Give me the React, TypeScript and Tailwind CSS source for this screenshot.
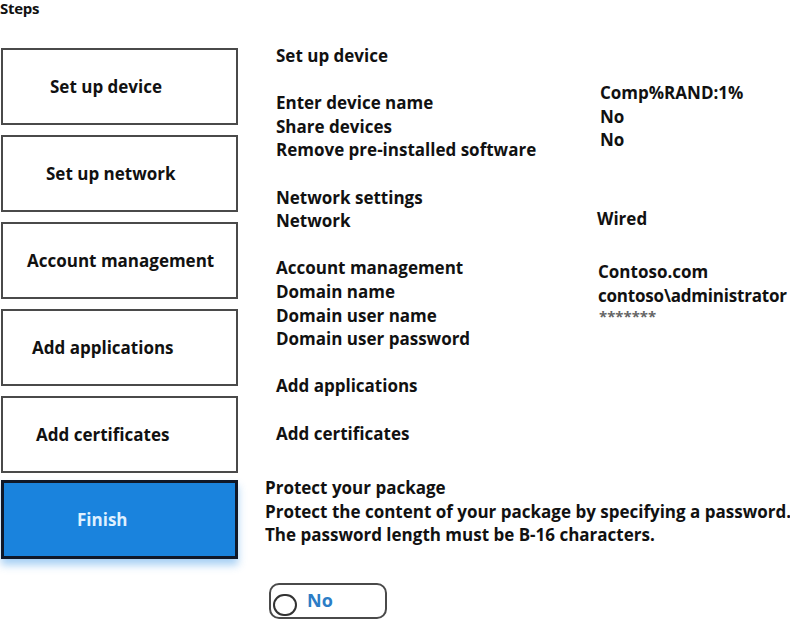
import React from "react";

const steps = [
  { label: "Set up device", pl: "pl-[47px]" },
  { label: "Set up network", pl: "pl-[43px]" },
  { label: "Account management", pl: "pl-[24px]" },
  { label: "Add applications", pl: "pl-[29px]" },
  { label: "Add certificates", pl: "pl-[33px]" },
];

export default function App() {
  return (
    <div className="w-[790px] h-[621px] bg-white overflow-hidden text-[#111] font-['Open_Sans',sans-serif]">
      <div className="text-[15px] font-bold leading-[17px] tracking-[-0.3px]">Steps</div>
      <div className="flex">
        <div className="flex flex-col w-[237px] ml-[1px] mt-[31px] shrink-0">
          {steps.map((s) => (
            <div
              key={s.label}
              className={`h-[77px] mb-[10px] border-2 border-[#4a4a4a] flex items-center text-[17px] font-bold ${s.pl}`}
            >
              {s.label}
            </div>
          ))}
          <div className="h-[79px] -mt-[3px] border-[3px] border-[#101828] bg-[#1a83dd] flex items-center pl-[73px] text-[17px] font-bold text-[#dff0ff] shadow-[0_6px_8px_rgba(60,150,230,0.45)]">
            Finish
          </div>
        </div>
        <div className="flex flex-col mt-[27px]">
          <div className="flex ml-[38px] text-[17px] font-bold leading-[23.6px] whitespace-nowrap">
            <div className="flex flex-col w-[324px] shrink-0">
              <div>Set up device</div>
              <div className="h-[23.6px]" />
              <div>Enter device name</div>
              <div>Share devices</div>
              <div>Remove pre-installed software</div>
              <div className="h-[23.6px]" />
              <div>Network settings</div>
              <div>Network</div>
              <div className="h-[23.6px]" />
              <div>Account management</div>
              <div>Domain name</div>
              <div>Domain user name</div>
              <div>Domain user password</div>
              <div className="h-[23.6px]" />
              <div>Add applications</div>
              <div className="h-[23.6px]" />
              <div>Add certificates</div>
            </div>
            <div className="flex flex-col">
              <div className="mt-[37px]">Comp%RAND:1%</div>
              <div>No</div>
              <div>No</div>
              <div className="mt-[55px] -ml-[3px]">Wired</div>
              <div className="mt-[30px] -ml-[2px]">Contoso.com</div>
              <div className="-ml-[2px] tracking-[-0.2px]">contoso\administrator</div>
              <div className="text-[15px] leading-[14px] text-[#666] -ml-[1px] mt-[1px]">*******</div>
            </div>
          </div>
          <div className="ml-[27px] mt-[31px] text-[17px] font-bold leading-[23.6px] whitespace-nowrap">
            <div>Protect your package</div>
            <div>Protect the content of your package by specifying a password.</div>
            <div>The password length must be B-16 characters.</div>
          </div>
          <div className="ml-[31px] mt-[36px] w-[118px] h-[36px] rounded-[10px] border-2 border-[#4a4a4a] flex items-center pl-[2px]">
            <div className="w-[24px] h-[22px] rounded-full border-2 border-[#333] mt-[8px]" />
            <div className="ml-[10px] text-[18px] font-bold text-[#2c7dc6]">No</div>
          </div>
        </div>
      </div>
    </div>
  );
}
